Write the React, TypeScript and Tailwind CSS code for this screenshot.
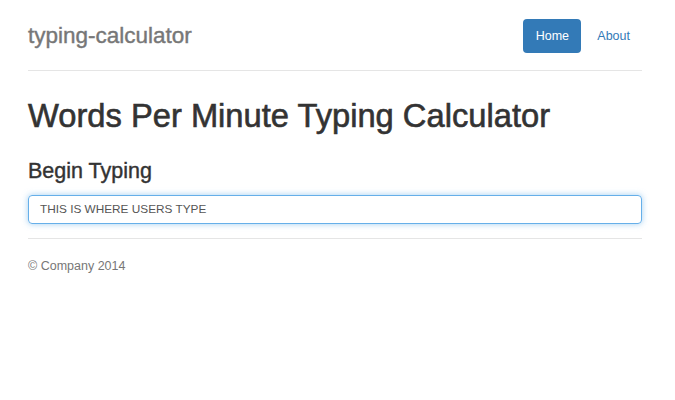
export default function App() {
  return (
    <div className="min-h-[400px] bg-white" style={{ fontFamily: '"Liberation Sans", Arial, sans-serif' }}>
      <div className="ml-[28px] w-[614px] pt-[19px]">
        <div className="flex items-center justify-between border-b border-[#e5e5e5] pb-[17px]">
          <div className="text-[22.5px] text-[#777] leading-none [-webkit-text-stroke:0.4px_#777]">typing-calculator</div>
          <div className="flex items-center mr-[12px]">
            <div className="h-[34px] w-[58px] rounded-[4px] bg-[#337ab7] text-white text-[12.5px] flex items-center justify-center">Home</div>
            <div className="ml-[16px] text-[12.5px] text-[#337ab7]">About</div>
          </div>
        </div>
        <h1 className="mt-[25px] text-[32.7px] leading-[40px] text-[#333] [-webkit-text-stroke:0.6px_#333]">Words Per Minute Typing Calculator</h1>
        <h2 className="mt-[22px] text-[21.5px] leading-[26px] text-[#333] [-webkit-text-stroke:0.4px_#333]">Begin Typing</h2>
        <div className="mt-[11px] h-[29px] rounded-[4px] border border-[#66afe9] shadow-[0_0_6px_rgba(102,175,233,0.6)] flex items-center px-[11px] text-[11.8px] text-[#555]">
          THIS IS WHERE USERS TYPE
        </div>
        <div className="mt-[14px] border-t border-[#e5e5e5]"></div>
        <div className="mt-[18px] text-[12.5px] text-[#777]">© Company 2014</div>
      </div>
    </div>
  );
}
